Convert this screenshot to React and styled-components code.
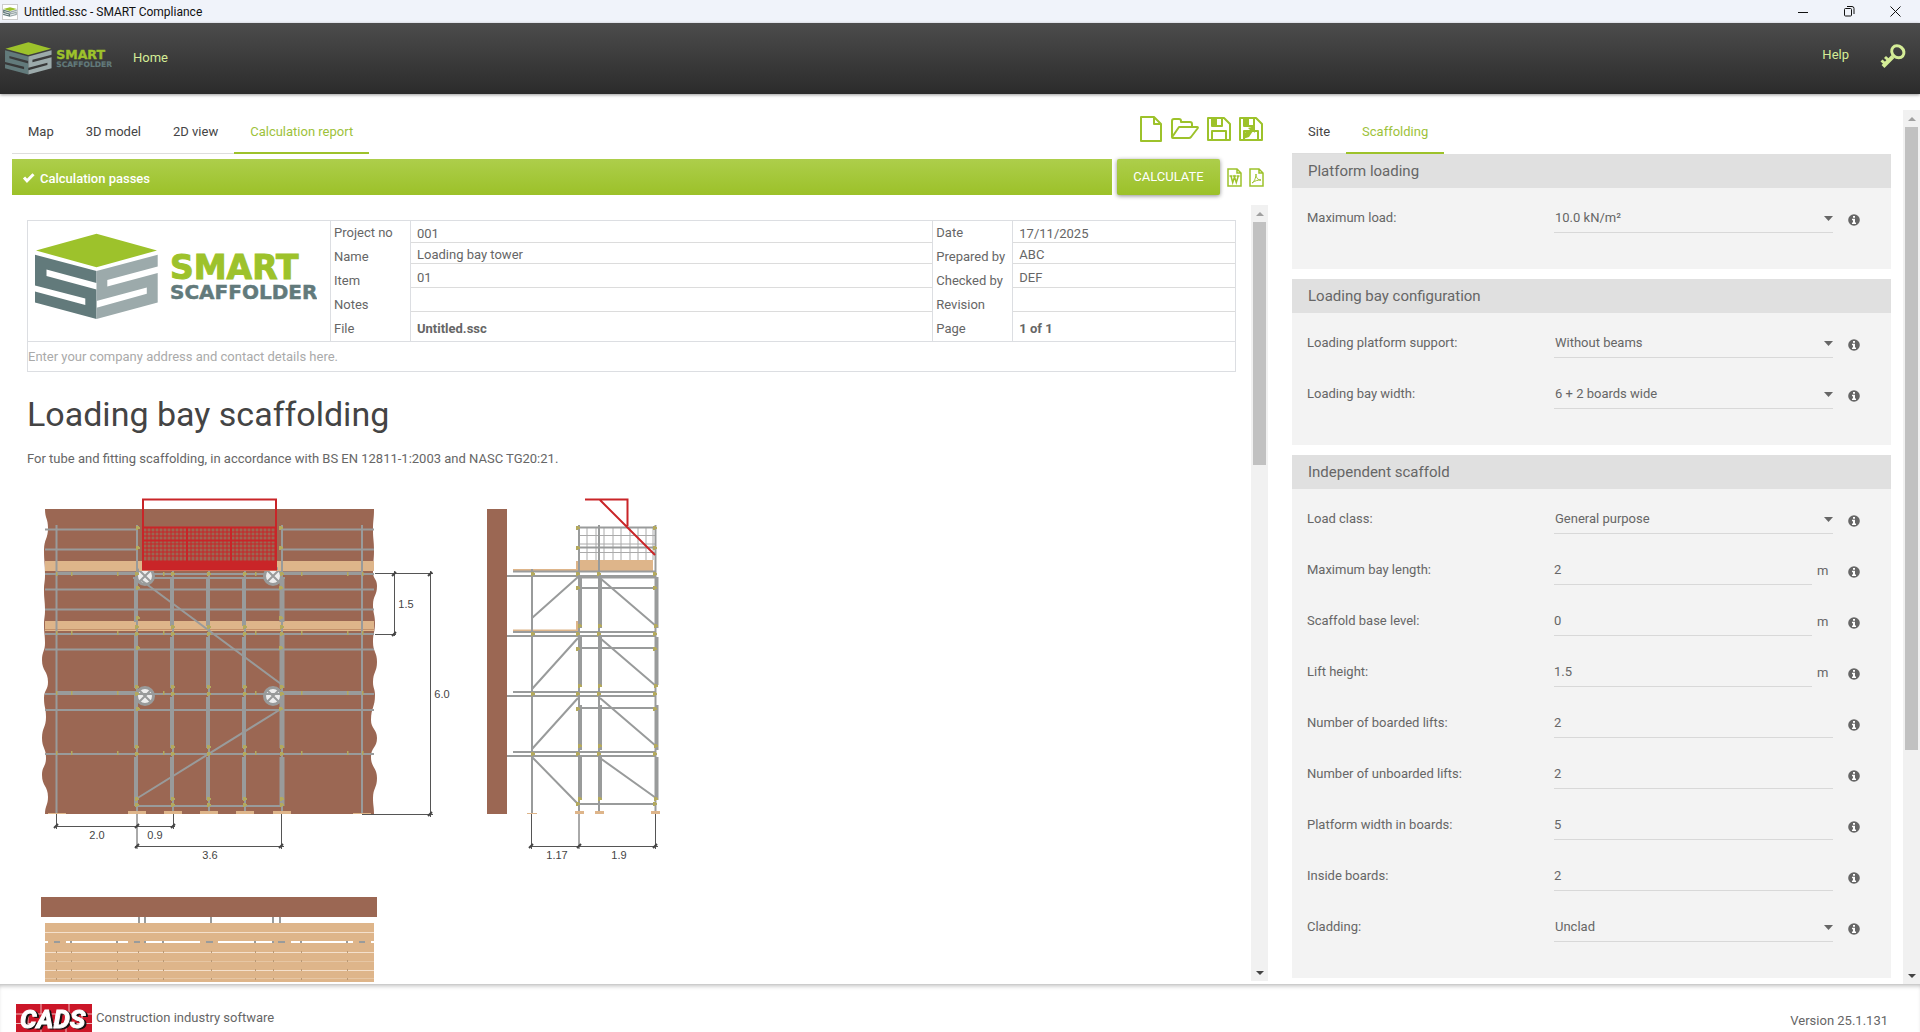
import React, { useState } from 'react';
import styled, { createGlobalStyle } from 'styled-components';

const GlobalStyle = createGlobalStyle`
    * {
        box-sizing: border-box;
    }

    body {
        margin: 0;
        background-color: white;
        color: #666;
        font-family: Roboto, "Liberation Sans", sans-serif;
        font-size: 13px;
    }

    button, input, select {
        font: inherit;
        color: inherit;
    }
`;

const Window = styled.div`
    height: 100vh;
    display: flex;
    flex-direction: column;
    overflow: hidden;
`;

const TitleBar = styled.div`
    height: 23px;
    flex-shrink: 0;
    display: flex;
    align-items: center;
    padding: 0 2px;
    background-color: #f0f3fa;
    color: #111;
    font-size: 12px;
`;

const AppIcon = styled.span`
    width: 16px;
    height: 16px;
    display: flex;
    align-items: center;
    justify-content: center;
    margin-right: 6px;
    border: 1px solid #ccc;
    background-color: white;
`;

const WindowButtons = styled.div`
    display: flex;
    margin-left: auto;
`;

const WindowButton = styled.button`
    width: 46px;
    height: 22px;
    display: flex;
    align-items: center;
    justify-content: center;
    padding: 0;
    border: none;
    background: none;
`;

const Header = styled.header`
    height: 71px;
    flex-shrink: 0;
    display: flex;
    align-items: center;
    padding: 0 14px 0 5px;
    background-image: linear-gradient(#4c4c4c, #2b2b2b);
    box-shadow: 0 1px 3px rgba(0, 0, 0, 0.4);
`;

const HeaderLink = styled.a`
    margin-left: ${props => props.$end ? 'auto' : '21px'};
    margin-right: ${props => props.$end ? '31px' : '0'};
    padding-bottom: ${props => props.$end ? '8px' : '3px'};
    color: #d5ed97;
    text-decoration: none;
`;

const KeyButton = styled.button`
    padding: 0 0 5px;
    border: none;
    background: none;
    display: flex;
`;

const Main = styled.main`
    flex: 1;
    min-height: 0;
    display: grid;
    grid-template-columns: minmax(0, 1fr) 628px;
    column-gap: 24px;
    padding: 16px 0 0 12px;
`;

const Column = styled.section`
    min-height: 0;
    display: flex;
    flex-direction: column;
    overflow: hidden;
`;

const ScrollRow = styled.div`
    flex: 1;
    min-height: 0;
    display: flex;
`;

const ScrollContent = styled.div`
    flex: 1;
    min-width: 0;
    overflow: hidden;
`;

const TopRow = styled.div`
    display: flex;
    justify-content: space-between;
    align-items: flex-start;
    flex-shrink: 0;
    margin-bottom: 5px;
`;

const Tabs = styled.nav`
    display: flex;
    flex-shrink: 0;
    height: 44px;
`;

const Tab = styled.button`
    padding: 0 16px;
    border: none;
    border-bottom: ${props => props.$active ? '2px solid #9dc22b' : '1px solid #ddd'};
    background: none;
    color: ${props => props.$active ? '#9dc23a' : '#444'};
`;

const FileButtons = styled.div`
    display: flex;
    align-items: center;
    gap: 8px;
    padding: 5px 5px 0 0;
`;

const IconButton = styled.button`
    display: flex;
    padding: 0;
    border: none;
    background: none;
    color: #9dc22b;
`;

const StatusRow = styled.div`
    display: flex;
    align-items: center;
    flex-shrink: 0;
    height: 36px;
    margin-bottom: 10px;
    padding-right: 4px;
`;

const Status = styled.div`
    flex: 1;
    height: 36px;
    display: flex;
    align-items: center;
    gap: 5px;
    padding: 2px 10px 0;
    background-image: linear-gradient(#adce4b, #9cc129);
    color: white;
    font-weight: 500;
`;

const CalculateButton = styled.button`
    width: 103px;
    height: 36px;
    margin: 0 7px 0 5px;
    padding: 0 0 2px;
    border: none;
    border-radius: 2px;
    background-image: linear-gradient(#adce4b, #9cc129);
    box-shadow: 0 1px 4px rgba(0, 0, 0, 0.45);
    color: white;
`;

const ExportButtons = styled.div`
    display: flex;
    gap: 7px;
`;

const Report = styled.article`
    padding: 15px 15px 0;
`;

const TitleBlock = styled.div`
    border: 1px solid #dcdee2;
    line-height: 16px;
`;

const TitleGrid = styled.div`
    display: grid;
    grid-template-columns: 302px 81px minmax(0, 522fr) 81px minmax(0, 222fr);
    height: 121px;
    border-bottom: 1px solid #dcdee2;
`;

const LogoCell = styled.div`
    padding: 12px 7px;
`;

const LabelColumn = styled.div`
    display: flex;
    flex-direction: column;
    border: solid #dcdee2;
    border-width: 0 1px;
`;

const TitleLabel = styled.label`
    height: 24px;
    padding: 4px 3px;
    white-space: nowrap;
`;

const ValueColumn = styled.div`
    display: flex;
    flex-direction: column;
`;

const TitleInput = styled.input`
    width: 100%;
    height: ${props => props.$height}px;
    padding: 3px 6px 0;
    border: none;
    border-bottom: 1px solid #dcdcdc;
    background: none;
    outline: none;
`;

const TitleOutput = styled.output`
    flex: 1;
    padding: 9px 6px 0;
    font-weight: bold;
`;

const AddressInput = styled.input`
    display: block;
    width: 100%;
    height: 29px;
    padding: 0;
    border: none;
    outline: none;

    &::placeholder {
        color: #aaa;
        opacity: 1;
    }
`;

const ReportHeading = styled.h1`
    margin: 22px 0 0;
    color: #444;
    font-size: 34px;
    font-weight: 400;
    line-height: 40px;
`;

const ReportText = styled.p`
    margin: 17px 0 0;
    line-height: 16px;
`;

const Drawing = styled.svg`
    display: block;
    margin-top: 23px;
`;

const Track = styled.div`
    width: 17px;
    height: ${props => props.$short ? 'calc(100% - 3px)' : '100%'};
    flex-shrink: 0;
    display: flex;
    flex-direction: column;
    align-items: center;
    background-color: #f1f1f1;
`;

const TrackArrow = styled.span`
    height: 17px;
    display: flex;
    align-items: center;
    margin-top: ${props => props.$end ? 'auto' : '0'};
`;

const Thumb = styled.div`
    width: 13px;
    height: ${props => props.$size};
    background-color: #c1c1c1;
`;

const PanelContent = styled.div`
    flex: 1;
    min-width: 0;
    padding-right: 12px;
    overflow: hidden;
`;

const Panel = styled.section`
    margin-bottom: 10px;
    padding-bottom: 30px;
    background-color: #f3f3f3;
`;

const PanelTitle = styled.h2`
    height: 34px;
    margin: 0;
    padding-left: 16px;
    background-color: #e0e0e0;
    font-size: 15px;
    font-weight: 400;
    line-height: 34px;
`;

const FieldRow = styled.div`
    height: 51px;
    display: flex;
    align-items: flex-start;
    padding: 15px 31px 0 15px;
`;

const FieldLabel = styled.label`
    width: 247px;
    line-height: 30px;
`;

const FieldControl = styled.div`
    flex: 1;
    display: flex;
    align-items: center;
    position: relative;
`;

const FieldInput = styled.input`
    flex: 1;
    min-width: 0;
    height: 30px;
    padding: 0;
    border: none;
    border-bottom: 1px solid #d8d8d8;
    background: none;
    outline: none;
`;

const FieldSelect = styled.select`
    flex: 1;
    height: 30px;
    padding: 0 0 0 1px;
    border: none;
    border-bottom: 1px solid #d8d8d8;
    border-radius: 0;
    background: none;
    appearance: none;
    outline: none;
`;

const Caret = styled.svg`
    position: absolute;
    right: 0;
    top: 13px;
    pointer-events: none;
`;

const Unit = styled.span`
    width: 21px;
    padding-left: 5px;
`;

const InfoButton = styled.button`
    display: flex;
    margin: 11px 0 0 15px;
    padding: 0;
    border: none;
    background: none;
    color: #666;
`;

const Footer = styled.footer`
    height: 48px;
    flex-shrink: 0;
    display: flex;
    align-items: flex-start;
    padding: 19px 32px 0 16px;
    border-top: 1px solid #ccc;
    background-color: white;
    box-shadow: inset 0 3px 4px -2px rgba(0, 0, 0, 0.25);
`;

const FooterText = styled.span`
    margin: ${props => props.$end ? '9px 0 0 auto' : '6px 0 0 4px'};
    line-height: 16px;
`;

const Cube = () => (
    <g>
        <path fill="#9dc22b" d="M36 250.500L96.500 233.800L157 250.500L96.500 267.300Z" />
        <path fill="#627a7b" d="M35 254.700L96.500 271V283L46.500 269.600V276L96.500 289.600V319L35 302.500V291.500L85.300 305V298.500L35 285.500Z" />
        <path fill="#9caaab" d="M96.500 271L157.700 254.700V266.500L107.300 280V286.500L157.700 273V302.500L96.500 319V307.700L146.800 293.700V287.400L96.500 301Z" />
    </g>
);

const Logo = ({ width }) => (
    <svg width={width} viewBox="35 233 282 87" role="img" aria-label="Smart Scaffolder">
        <Cube />
        <text x="170" y="279" fill="#9dc22b" stroke="#9dc22b" fontFamily="DejaVu Sans" fontWeight="bold" fontSize="33">SMART</text>
        <text x="170" y="299" fill="#627a7b" stroke="#627a7b" strokeWidth="0.500" fontFamily="DejaVu Sans" fontWeight="bold" fontSize="20">SCAFFOLDER</text>
    </svg>
);

const Scrollbar = ({ size, short }) => (
    <Track $short={short}>
        <TrackArrow>
            <svg width="8" height="4" viewBox="0 0 8 4"><path d="M0 4L4 0L8 4Z" fill="#a0a0a0" /></svg>
        </TrackArrow>
        <Thumb $size={size} />
        <TrackArrow $end>
            <svg width="8" height="4" viewBox="0 0 8 4"><path d="M0 0L4 4L8 0Z" fill="#444" /></svg>
        </TrackArrow>
    </Track>
);

const CheckIcon = () => (
    <svg width="13" height="12" viewBox="0 0 13 12" fill="none" stroke="currentColor" strokeWidth="3">
        <path d="M2 5.500L5 8.800L11.500 2.300" />
    </svg>
);

const InfoIcon = () => (
    <svg width="12" height="12" viewBox="0 0 12 12">
        <circle cx="6" cy="6" r="5.800" fill="currentColor" />
        <path d="M5 2H7V3.700H5Z M4 4.700H7V8.500H8V10H4V8.500H5V6.200H4Z" fill="white" />
    </svg>
);

const NewIcon = () => (
    <svg width="24" height="28" viewBox="0 0 24 28" fill="none" stroke="currentColor" strokeWidth="2" strokeLinejoin="round">
        <path d="M2 2H15L22 9V26H2Z M15 2V9H22" />
    </svg>
);

const OpenIcon = () => (
    <svg width="28" height="22" viewBox="0 0 28 22" fill="none" stroke="currentColor" strokeWidth="2" strokeLinejoin="round">
        <path d="M1 19V3Q1 1 3 1H8Q10 1 10 3V4H19Q21 4 21 6V9" />
        <path d="M8 9H26Q27.500 9 26.500 10.500L20 19Q19 20 18 20H2Q0.500 20 1.500 18.500Z" />
    </svg>
);

const SaveIcon = ({ edit }) => (
    <svg width="24" height="24" viewBox="0 0 24 24" fill="none" stroke="currentColor" strokeWidth="2" strokeLinejoin="round">
        <path d="M1 1H17L23 7V23H1Z" />
        <path d="M5 1V9H15V1Z M5 23V14H19V23" />
        <path d="M6 2H10V8H6Z" fill="currentColor" stroke="none" />
        {edit && <path d="M4 22L5 16L11 13L9 11L16 9L16 16L14 14L10 20Z" fill="currentColor" stroke="none" />}
    </svg>
);

const WordIcon = () => (
    <svg width="15" height="19" viewBox="0 0 15 19" fill="none" stroke="currentColor" strokeWidth="1.500">
        <path d="M1 1H10L14 5V18H1Z M10 1V5H14" />
        <path d="M2.500 8H5.500M6 8H9M9.500 8H12.500M4 8L5.700 14.500L7.500 9L9.300 14.500L11.300 8" />
    </svg>
);

const PdfIcon = () => (
    <svg width="15" height="19" viewBox="0 0 15 19" fill="none" stroke="currentColor" strokeWidth="1.500">
        <path d="M1 1H10L14 5V18H1Z M10 1V5H14" />
        <path d="M3 15C5 14 7 10 7 6C7 10 9 12 12 12C9 12 6 12.500 3 15" strokeWidth="1" />
    </svg>
);

const KeyIcon = () => (
    <svg width="26" height="24" viewBox="0 0 26 24" fill="none" stroke="#d5ed97">
        <ellipse cx="17.800" cy="7.800" rx="6.500" ry="5.600" strokeWidth="3" transform="rotate(40 17.800 7.800)" />
        <path d="M13 12.500L3 22.500" strokeWidth="4" />
        <path d="M9.500 17L5 13M6 20.500L1.500 16.500" strokeWidth="3" />
    </svg>
);

const CadsText = styled.text`
    fill: white;
    stroke: white;
    font-size: 26px;
    font-style: italic;
    font-weight: 700;
    filter: drop-shadow(2px 1px 0 #111);
`;

const CadsLogo = () => (
    <svg width="76" height="28" viewBox="0 0 76 28" role="img" aria-label="CADS">
        <rect width="76" height="28" fill="#cb1628" />
        <path d="M0 10H76M0 19.500H76M25 0V10M53 0V10M12 10V19M40 10V19M66 10V19M25 20V28M50 20V28" stroke="#f0b8bc" />
        <CadsText x="4" y="24">CADS</CadsText>
    </svg>
);

const tube = '#999b9b';
const brick = '#9b6753';
const board = '#deb58a';

const leftEdge = [
    [45, 814], [48, 797], [42, 775], [46, 758], [42, 738], [46, 717], [44, 698], [48, 682], [42, 660],
    [45, 643], [44, 625], [45, 610], [44, 590], [45, 575], [44, 550], [48, 528], [45, 509],
];

const rightEdge = [
    [374, 509], [373, 530], [374, 550], [373, 572], [377, 586], [373, 605], [375, 623], [373, 642], [377, 662],
    [373, 682], [375, 695], [371, 720], [377, 738], [371, 757], [377, 778], [373, 798], [374, 814],
];

// smooth edge that is vertical at each of its points
const wave = points => points.slice(1).map(([x, y], i) => {
    const [px, py] = points[i];
    const mid = (y + py) / 2;
    return `C${px} ${mid} ${x} ${mid} ${x} ${y}`;
}).join('');

const wall = `M374 509${wave(rightEdge)}L45 814${wave(leftEdge)}Z`;

const Wheel = ({ x, y }) => (
    <g stroke={tube}>
        <circle cx={x} cy={y} r="8.500" fill="#eee" strokeWidth="3" />
        <path d={`M${x - 6} ${y - 6}L${x + 6} ${y + 6}M${x + 6} ${y - 6}L${x - 6} ${y + 6}`} strokeWidth="2" />
    </g>
);

const Couplers = ({ xs, ys }) => (
    <g fill="#b3a95e">
        {ys.map(y => xs.map(x => <path key={`${x}-${y}`} d={`M${x - 2} ${y - 2}h3v1h1v2h-2v1h-2z`} />))}
    </g>
);

const Ticks = ({ points }) => (
    <g stroke="#444">
        {points.map(([x, y]) => <path key={`${x}-${y}`} d={`M${x - 2} ${y + 2}L${x + 2} ${y - 2}`} strokeWidth="2" />)}
    </g>
);

const FrontElevation = () => (
    <g fill="none">
        <path fill={brick} d={wall} />
        <path fill={board} d="M45 561H374V571H45Z M45 621H374V631H45Z" />
        <path stroke="#c49169" d="M45 629.500H374" />
        <g stroke={tube} strokeWidth="2">
            <path d="M45 529.500H138M281 529.500H374M45 549.500H138M281 549.500H374M45 574H374M133 578H285M45 589.500H374M45 609.500H374M45 634H374M45 649.500H374M45 694H374M45 710H374M45 754H374M137 806H282" />
            <path d="M56 573H138M281 573H363M56 692.500H138M281 692.500H363" strokeWidth="3" />
            <path d="M56.500 525V814M362 525V814M137 525V812M282 525V812M173 570V812M209 570V812M245 570V812" />
            <path d="M136 577V622M136 635V688M136 694V748M136 757V806M172 577V626M172 637V688M172 697V748M172 757V800M208 577V626M208 637V688M208 697V748M208 757V800M244 577V626M244 637V688M244 697V748M244 757V800" strokeWidth="4" />
            <path d="M282 577V622M282 635V688M282 694V748M282 757V806" strokeWidth="5" />
        </g>
        <Wheel x={145} y={576} />
        <Wheel x={273} y={576} />
        <Wheel x={145} y={696} />
        <Wheel x={273} y={696} />
        <path stroke={tube} strokeWidth="2" d="M141 580L281 684M281 709L136 799M45 694H374" />
        <Couplers xs={[137, 173, 209, 245, 282]} ys={[574, 627, 634, 687, 694, 747, 754, 799, 805]} />
        <Couplers xs={[138, 281]} ys={[528, 548, 588, 618, 648, 709]} />
        <g fill="#b3a95e">
            {[574, 633, 693, 753].map(y => [56, 71, 117, 163, 255, 301, 347, 362].map(x => (
                <rect key={`${x}-${y}`} x={x} y={y - 2} width="1.500" height="4" />
            )))}
        </g>
        <path fill={board} d="M139 562H142V570H278V562H281V571H139Z" />
        <g stroke="#c92528">
            <rect x="143" y="499.500" width="133" height="70" strokeWidth="2" />
            <path d="M142 527.500H277M142 540.500H277M187 527V562M231 527V562" strokeWidth="2" />
            {Array.from({ length: 33 }, (_, i) => <path key={i} d={`M${147 + i * 4} 528V561`} />)}
            {[532, 536, 544, 548, 552, 556].map(y => <path key={y} d={`M143 ${y}H277`} />)}
        </g>
        <rect x="142" y="560.500" width="135" height="9" fill="#c92528" />
        <path fill={board} d="M128 811H146V814H128Z M164 811H182V814H164Z M200 811H218V814H200Z M236 811H254V814H236Z M273 811H291V814H273Z M48 813H66V814H48Z M353 813H371V814H353Z" />
        <path stroke="#555" d="M375 573.500H433M375 634.500H396M394.500 571V636M430.500 571V817M362 814.500H433M56.500 814V829M137 814V849M173.500 814V829M281.500 814V849M55 826.500H175M135 846.500H284" />
        <Ticks points={[[394, 574], [394, 634], [430, 574], [430, 814], [56, 826], [137, 826], [173, 826], [137, 846], [281, 846]]} />
    </g>
);

const SideElevation = () => (
    <g fill="none">
        <rect x="487" y="509" width="20" height="305" fill={brick} />
        <path fill={board} d="M513 569H578V572H513Z M576 561H578V571H576Z M513 629.500H578V632H513Z M576 621H578V631H576Z M579 560H653V571H579Z" />
        <g stroke="#aaa">
            {[587, 596, 604, 613, 621, 630, 638, 646].map(x => <path key={x} d={`M${x} 527V560`} />)}
            <path d="M579 535.500H655M579 544H655M579 552.500H655M653 527V560" />
        </g>
        <g stroke={tube} strokeWidth="2">
            <path d="M579 527.500H656M579 547.500H656M513 571.500H656M507 576H656M513 632H656M507 636H656M513 692H656M507 696H656M513 752H656M507 756H656M579 588H656M579 648H656M579 708H656M579 804H656" />
            <path d="M579 577H656" strokeWidth="3" />
            <path d="M532 569V813M579 525V812M599 525V812M655.500 525V812" />
            <path d="M580.500 577V628M580.500 637V685M580.500 705V750M580.500 757V800M600.500 577V628M600.500 637V685M600.500 705V750M600.500 757V800M657 577V628M657 637V685M657 705V750M657 757V800" strokeWidth="3" />
            <path d="M578 577L532 618M578 638L532 689M578 698L532 749M532 757L578 804M600 578L656 626M600 638L656 686M600 698L656 746M600 758L656 798" />
        </g>
        <Couplers xs={[533, 578, 599, 655]} ys={[574, 634, 694, 754]} />
        <Couplers xs={[578, 655]} ys={[528, 548, 588, 649, 709, 804]} />
        <Couplers xs={[580, 600, 656]} ys={[626, 686, 746, 799]} />
        <path stroke="#c92528" strokeWidth="2" d="M585 499.500H627.500V526M600 500L655 555" />
        <path fill={board} d="M527 813H537V814H527Z M575 811H584V814H575Z M595 811H604V814H595Z M651 811H660V814H651Z" />
        <path stroke="#555" d="M531.500 814V849M579 814V849M655.500 814V849M530 846.500H658" />
        <Ticks points={[[531, 846], [579, 846], [655, 846]]} />
    </g>
);

const PlanView = () => (
    <g fill="none">
        <rect x="41" y="897" width="336" height="20" fill={brick} />
        <path stroke={tube} strokeWidth="2" d="M139 917V923M145 917V923M211 917V923M273 917V923M280 917V923" />
        <rect x="45" y="923" width="329" height="61" fill={board} />
        <path stroke="#f4e0cc" d="M45 932.500H374M45 952.500H374M45 970.500H374" />
        <path stroke="#e6c6a4" d="M45 961.500H374M45 978.500H374" />
        <path stroke="white" strokeWidth="2" d="M45 942H48M66 942H128M146 942H200M218 942H273M291 942H353M371 942H374" />
        <path stroke={tube} strokeWidth="2" d="M54 942H60M134 942H140M206 942H213M278 942H285M359 942H365M71 941v2M117 941v2M145 941v2M163 941v2M255 941v2M273 941v2M301 941v2M347 941v2" />
        <path stroke="#b99874" strokeDasharray="2 7" d="M56.500 951V982M71.500 951V982M117.500 951V982M138.500 951V982M163.500 951V982M211.500 951V982M255.500 951V982M273.500 951V982M301.500 951V982M347.500 951V982" />
    </g>
);

const DimensionText = styled.text`
    fill: #444;
    font-family: "Liberation Sans", Arial, sans-serif;
    font-size: 11px;
    text-anchor: middle;
`;

const dimensions = [
    [406, 608, '1.5'], [442, 698, '6.0'], [97, 839, '2.0'], [155, 839, '0.9'],
    [210, 859, '3.6'], [557, 859, '1.17'], [619, 859, '1.9'],
];

// label, value, row height (none for the printed-only rows)
const reportDetails = [
    [
        ['Project no', '001', 22], ['Name', 'Loading bay tower', 21], ['Item', '01', 24],
        ['Notes', '', 24], ['File', 'Untitled.ssc'],
    ],
    [
        ['Date', '17/11/2025', 22], ['Prepared by', 'ABC', 21], ['Checked by', 'DEF', 24],
        ['Revision', '', 24], ['Page', '1 of 1'],
    ],
];

const panels = [
    {
        title: 'Platform loading',
        fields: [{ label: 'Maximum load', value: '10.0 kN/m²', select: true }],
    },
    {
        title: 'Loading bay configuration',
        fields: [
            { label: 'Loading platform support', value: 'Without beams', select: true },
            { label: 'Loading bay width', value: '6 + 2 boards wide', select: true },
        ],
    },
    {
        title: 'Independent scaffold',
        fields: [
            { label: 'Load class', value: 'General purpose', select: true },
            { label: 'Maximum bay length', value: '2', unit: 'm' },
            { label: 'Scaffold base level', value: '0', unit: 'm' },
            { label: 'Lift height', value: '1.5', unit: 'm' },
            { label: 'Number of boarded lifts', value: '2' },
            { label: 'Number of unboarded lifts', value: '2' },
            { label: 'Platform width in boards', value: '5' },
            { label: 'Inside boards', value: '2' },
            { label: 'Cladding', value: 'Unclad', select: true },
        ],
    },
];

const toId = text => text.toLowerCase().replace(/\s+/g, '-');

const DetailColumns = ({ items }) => (
    <>
        <LabelColumn>
            {items.map(([label]) => (
                <TitleLabel key={label} htmlFor={toId(label)}>{label}</TitleLabel>
            ))}
        </LabelColumn>
        <ValueColumn>
            {items.map(([label, value, height]) => (
                height
                    ? <TitleInput key={label} id={toId(label)} defaultValue={value} $height={height} />
                    : <TitleOutput key={label} id={toId(label)}>{value}</TitleOutput>
            ))}
        </ValueColumn>
    </>
);

const Field = ({ label, value, select, unit }) => (
    <FieldRow>
        <FieldLabel htmlFor={toId(label)}>{label}:</FieldLabel>
        <FieldControl>
            {select ? (
                <>
                    <FieldSelect id={toId(label)}>
                        <option>{value}</option>
                    </FieldSelect>
                    <Caret width="9" height="5" viewBox="0 0 9 5"><path d="M0 0H9L4.500 5Z" fill="#666" /></Caret>
                </>
            ) : (
                <FieldInput id={toId(label)} defaultValue={value} />
            )}
            {unit && <Unit>{unit}</Unit>}
        </FieldControl>
        <InfoButton aria-label={`About ${label}`}><InfoIcon /></InfoButton>
    </FieldRow>
);

const TabBar = ({ items, initial }) => {
    const [active, setActive] = useState(initial);

    return (
        <Tabs>
            {items.map(item => (
                <Tab key={item} $active={item === active} onClick={() => setActive(item)}>{item}</Tab>
            ))}
        </Tabs>
    );
};

const App = () => (
    <Window>
        <GlobalStyle />
        <TitleBar>
            <AppIcon><svg width="14" height="12" viewBox="34 233 125 87"><Cube /></svg></AppIcon>
            Untitled.ssc - SMART Compliance
            <WindowButtons>
                <WindowButton aria-label="Minimise">
                    <svg width="10" height="10" stroke="#111"><path d="M0 5.500H10" /></svg>
                </WindowButton>
                <WindowButton aria-label="Restore">
                    <svg width="11" height="11" fill="none" stroke="#111">
                        <rect x="0.500" y="2.500" width="7" height="7.500" rx="1" />
                        <path d="M3 0.500H8Q10 0.500 10 2.500V8" />
                    </svg>
                </WindowButton>
                <WindowButton aria-label="Close">
                    <svg width="11" height="11" stroke="#111"><path d="M0.500 0.500L10.500 10.500M10.500 0.500L0.500 10.500" /></svg>
                </WindowButton>
            </WindowButtons>
        </TitleBar>
        <Header>
            <Logo width={107} />
            <HeaderLink href="#home">Home</HeaderLink>
            <HeaderLink href="#help" $end>Help</HeaderLink>
            <KeyButton aria-label="Licence"><KeyIcon /></KeyButton>
        </Header>
        <Main>
            <Column>
                <TopRow>
                    <TabBar items={['Map', '3D model', '2D view', 'Calculation report']} initial="Calculation report" />
                    <FileButtons>
                        <IconButton aria-label="New"><NewIcon /></IconButton>
                        <IconButton aria-label="Open"><OpenIcon /></IconButton>
                        <IconButton aria-label="Save"><SaveIcon /></IconButton>
                        <IconButton aria-label="Save as"><SaveIcon edit /></IconButton>
                    </FileButtons>
                </TopRow>
                <StatusRow>
                    <Status><CheckIcon />Calculation passes</Status>
                    <CalculateButton>CALCULATE</CalculateButton>
                    <ExportButtons>
                        <IconButton aria-label="Export to Word"><WordIcon /></IconButton>
                        <IconButton aria-label="Export to PDF"><PdfIcon /></IconButton>
                    </ExportButtons>
                </StatusRow>
                <ScrollRow>
                    <ScrollContent>
                        <Report>
                            <TitleBlock>
                                <TitleGrid>
                                    <LogoCell><Logo width={282} /></LogoCell>
                                    {reportDetails.map(items => <DetailColumns key={items[0][0]} items={items} />)}
                                </TitleGrid>
                                <AddressInput aria-label="Company address" placeholder="Enter your company address and contact details here." />
                            </TitleBlock>
                            <ReportHeading>Loading bay scaffolding</ReportHeading>
                            <ReportText>For tube and fitting scaffolding, in accordance with BS EN 12811-1:2003 and NASC TG20:21.</ReportText>
                            <Drawing width="660" height="492" viewBox="27 490 660 492">
                                <FrontElevation />
                                <SideElevation />
                                <PlanView />
                                {dimensions.map(([x, y, text]) => <DimensionText key={text} x={x} y={y}>{text}</DimensionText>)}
                            </Drawing>
                        </Report>
                    </ScrollContent>
                    <Scrollbar size="243px" short />
                </ScrollRow>
            </Column>
            <ScrollRow>
                <PanelContent>
                    <TabBar items={['Site', 'Scaffolding']} initial="Scaffolding" />
                    {panels.map(panel => (
                        <Panel key={panel.title}>
                            <PanelTitle>{panel.title}</PanelTitle>
                            {panel.fields.map(field => <Field key={field.label} {...field} />)}
                        </Panel>
                    ))}
                </PanelContent>
                <Scrollbar size="623px" />
            </ScrollRow>
        </Main>
        <Footer>
            <CadsLogo />
            <FooterText>Construction industry software</FooterText>
            <FooterText $end>Version 25.1.131</FooterText>
        </Footer>
    </Window>
);

export default App;
